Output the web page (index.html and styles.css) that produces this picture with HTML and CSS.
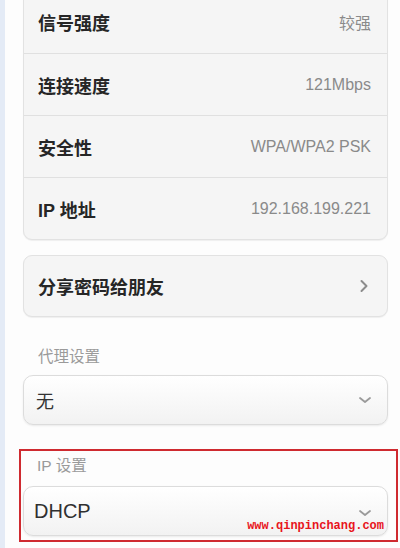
FILE: index.html
```html
<!DOCTYPE html>
<html lang="zh-CN">
<head>
<meta charset="utf-8">
<title>WLAN 详情</title>
<link rel="stylesheet" href="styles.css">
</head>
<body>
<div class="page">
  <div class="card info">
    <div class="row"><span class="key">信号强度</span><span class="val">较强</span></div>
    <div class="row"><span class="key">连接速度</span><span class="val">121Mbps</span></div>
    <div class="row"><span class="key">安全性</span><span class="val">WPA/WPA2 PSK</span></div>
    <div class="row"><span class="key">IP 地址</span><span class="val">192.168.199.221</span></div>
  </div>

  <div class="card share">
    <div class="row"><span class="key">分享密码给朋友</span>
      <svg class="chev-right" width="10" height="14" viewBox="0 0 10 14"><path d="M2.5 2 L7.5 7 L2.5 12" fill="none" stroke="#8c8c8c" stroke-width="2" stroke-linecap="round" stroke-linejoin="round"/></svg>
    </div>
  </div>

  <div class="group proxy">
    <div class="label">代理设置</div>
    <div class="select"><span class="opt">无</span>
      <svg class="chev-down" width="14" height="10" viewBox="0 0 14 10"><path d="M2 3 L7 7 L12 3" fill="none" stroke="#9a9a9a" stroke-width="1.8" stroke-linecap="round" stroke-linejoin="round"/></svg>
    </div>
  </div>

  <div class="group ipset">
    <div class="label">IP 设置</div>
    <div class="select dhcp"><span class="opt latin">DHCP</span>
      <svg class="chev-down" width="14" height="10" viewBox="0 0 14 10"><path d="M2 3 L7 7 L12 3" fill="none" stroke="#9a9a9a" stroke-width="1.8" stroke-linecap="round" stroke-linejoin="round"/></svg>
      <span class="mark">www.qinpinchang.com</span>
    </div>
  </div>
</div>
</body>
</html>
```

FILE: styles.css
```css
html, body {
  margin: 0;
  padding: 0;
  background: #fdfdfd;
  height: 548px;
  overflow: hidden;
}

body {
  font-family: "Liberation Sans", "Noto Sans CJK SC", sans-serif;
  border-left: 5px solid #e4ebf6;
  box-sizing: border-box;
}

.page {
  padding: 0 12px 0 18px;
}

.card {
  background: #f5f5f5;
  border: 1px solid #e2e2e2;
  border-radius: 9px;
  box-shadow: 0 1px 1px rgba(0, 0, 0, 0.06);
}

.info {
  margin-top: -10px;
}

.row {
  height: 61px;
  display: flex;
  align-items: center;
  justify-content: space-between;
  padding: 0 16px 0 14px;
  border-top: 1px solid #e0e0e0;
}

.row:first-child {
  border-top: none;
  height: 62px;
}

.key {
  font-size: 18px;
  font-weight: bold;
  color: #262626;
}

.val {
  font-size: 16px;
  color: #8a8a8a;
}

.share {
  margin-top: 15px;
}

.share .row {
  height: 60px;
  padding-right: 18px;
}

.chev-right {
  display: block;
}

.group .label {
  font-size: 15.5px;
  line-height: 20px;
  color: #9a9a9a;
}

.proxy {
  margin-top: 30px;
}

.proxy .label {
  padding-left: 15px;
}

.select {
  position: relative;
  margin-top: 8px;
  height: 48px;
  display: flex;
  align-items: center;
  justify-content: space-between;
  padding: 0 15px 0 12px;
  background: linear-gradient(#ffffff, #f2f2f2);
  border: 1px solid #dcdcdc;
  border-radius: 10px;
  box-shadow: 0 1px 2px rgba(0, 0, 0, 0.08);
}

.opt {
  font-size: 18px;
  color: #333;
}

.opt.latin {
  font-size: 20px;
  color: #303030;
}

.chev-down {
  display: block;
}

.ipset {
  margin: 24px -10px 0 -4px;
  border: 2px solid #cf2a30;
  padding: 5px 8px 4px 2px;
}

.ipset .label {
  padding-left: 14px;
}

.ipset .select {
  margin-top: 10px;
  padding-left: 10px;
}

.dhcp .chev-down {
  margin-top: 4px;
}

/* site stamp laid over the select box */
.mark {
  position: absolute;
  right: 3px;
  bottom: 2px;
  font-family: "Liberation Mono", "DejaVu Sans Mono", monospace;
  font-size: 12px;
  font-weight: bold;
  color: #e8141c;
}
```
